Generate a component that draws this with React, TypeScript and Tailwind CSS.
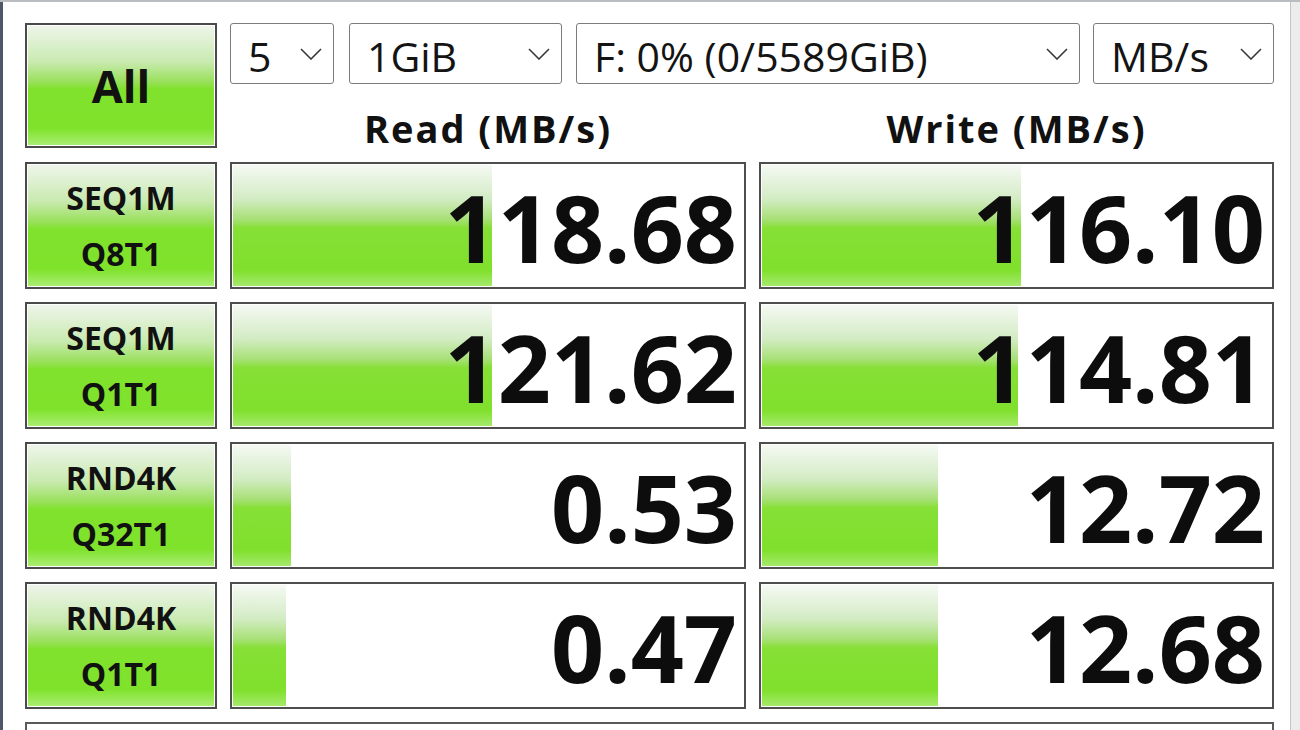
import React from "react";

const font = { fontFamily: '"Open Sans", "Noto Sans", "Liberation Sans", sans-serif' };

function Chevron() {
  return (
    <svg width="22" height="12" viewBox="0 0 22 12" className="shrink-0">
      <polyline points="1,1 11,11 21,1" fill="none" stroke="#3a3a3a" strokeWidth="1.6" />
    </svg>
  );
}

function Combo({ w, text }: { w: string; text: string }) {
  return (
    <div
      className={`${w} h-full shrink-0 flex items-center justify-between pl-[17px] pr-[11px] bg-white border-[1.5px] border-[#7c7c7c] rounded-[3px]`}
    >
      <span className="text-[41px] leading-none text-[#141414] pt-[6px]">{text}</span>
      <Chevron />
    </div>
  );
}

function Label({ l1, l2 }: { l1: string; l2?: string }) {
  return (
    <div className="w-[192px] h-full shrink-0 border-2 border-[#4a4a4a] p-[1px] bg-white">
      <div className="w-full h-full flex flex-col items-center justify-center bg-[linear-gradient(to_bottom,#eef5ea_0%,#c9eab0_30%,#98e05a_47%,#80e22c_53%,#7fe22b_86%,#a9ee72_100%)]">
        <span className="text-[32px] leading-[56px] font-bold text-[#111]">{l1}</span>
        {l2 && <span className="text-[32px] leading-[56px] font-bold text-[#111]">{l2}</span>}
      </div>
    </div>
  );
}

function Result({ w, bar, value }: { w: string; bar: number; value: string }) {
  return (
    <div className={`${w} h-full shrink-0 relative border-2 border-[#4e4e4e] bg-white`}>
      <div
        className="absolute left-[1px] top-[1px] bottom-[1px] bg-[linear-gradient(to_bottom,#f5f9f3_0%,#d3ecc4_28%,#a7e076_45%,#86e036_52%,#80e02c_87%,#a5ea6c_100%)]"
        style={{ width: bar }}
      />
      <div className="relative h-full flex justify-end pr-[7px] pt-[17px]">
        <span className="text-[93px] leading-none font-bold text-[#0d0d0d]">{value}</span>
      </div>
    </div>
  );
}

const rows = [
  { l1: "SEQ1M", l2: "Q8T1", r: "118.68", rb: 259, w: "116.10", wb: 259 },
  { l1: "SEQ1M", l2: "Q1T1", r: "121.62", rb: 259, w: "114.81", wb: 256 },
  { l1: "RND4K", l2: "Q32T1", r: "0.53", rb: 58, w: "12.72", wb: 176 },
  { l1: "RND4K", l2: "Q1T1", r: "0.47", rb: 53, w: "12.68", wb: 176 },
];

export default function App() {
  return (
    <div className="w-[1300px] h-[730px] overflow-hidden bg-white flex flex-col" style={font}>
      <div className="h-[2px] shrink-0 bg-[#b9bcc0]" />
      <div className="flex-1 flex min-h-0">
        <div className="w-[3px] shrink-0 bg-[#4f5866]" />
        <div className="flex-1 pl-[22px] pt-[21px] flex flex-col">
          <div className="flex gap-[13px]">
            <div className="w-[192px] h-[125px] shrink-0 border-2 border-[#4a4a4a] p-[1px] bg-white">
              <div className="w-full h-full flex items-center justify-center bg-[linear-gradient(to_bottom,#eef5ea_0%,#c9eab0_30%,#98e05a_47%,#80e22c_53%,#7fe22b_86%,#a9ee72_100%)]">
                <span className="text-[45px] leading-none font-bold text-[#111]">All</span>
              </div>
            </div>
            <div className="w-[1044px] flex flex-col">
              <div className="h-[61px] flex">
                <Combo w="w-[104px]" text="5" />
                <div className="w-[15px] shrink-0" />
                <Combo w="w-[213px]" text="1GiB" />
                <div className="w-[14px] shrink-0" />
                <Combo w="w-[504px]" text="F: 0% (0/5589GiB)" />
                <div className="w-[13px] shrink-0" />
                <Combo w="w-[181px]" text="MB/s" />
              </div>
              <div className="h-[64px] flex gap-[13px]">
                <div className="w-[516px] flex justify-center pt-[25px]">
                  <span className="text-[38px] leading-none font-bold tracking-[2px] text-[#111]">Read (MB/s)</span>
                </div>
                <div className="w-[515px] flex justify-center pt-[25px]">
                  <span className="text-[38px] leading-none font-bold tracking-[2px] text-[#111]">Write (MB/s)</span>
                </div>
              </div>
            </div>
          </div>
          <div className="mt-[14px] flex flex-col gap-[13px]">
            {rows.map((r, i) => (
              <div key={i} className="h-[127px] flex gap-[13px]">
                <Label l1={r.l1} l2={r.l2} />
                <Result w="w-[516px]" bar={r.rb} value={r.r} />
                <Result w="w-[515px]" bar={r.wb} value={r.w} />
              </div>
            ))}
            <div className="w-[1249px] h-[60px] border-2 border-[#5a5a5a] bg-white" />
          </div>
        </div>
        <div className="w-[10px] shrink-0 border-l border-[#c4c4c4] bg-[#ececec]" />
      </div>
    </div>
  );
}
